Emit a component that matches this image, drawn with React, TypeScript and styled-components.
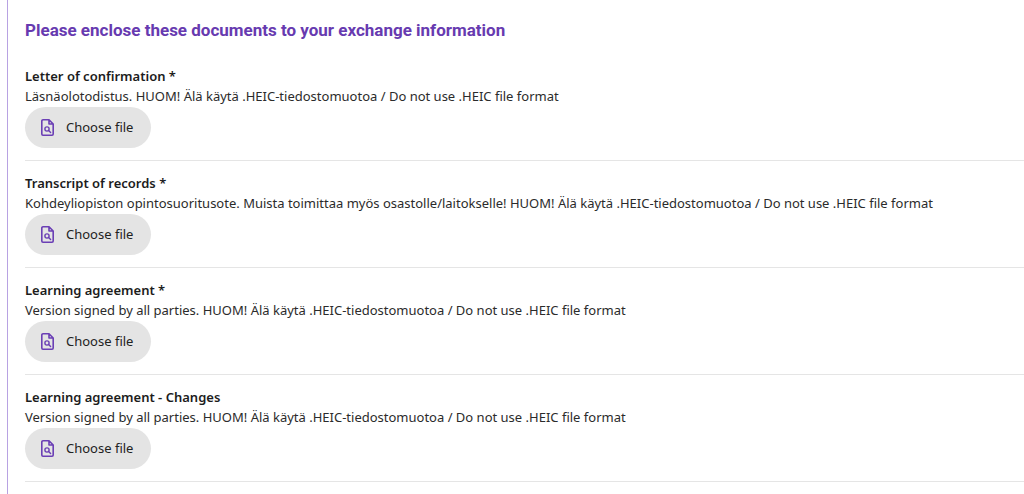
import React from "react";
import styled, { createGlobalStyle } from "styled-components";

const GlobalStyle = createGlobalStyle`
  * { box-sizing: border-box; }
  body { margin: 0; background: #fff; color: #2b2b2b; font-family: "Noto Sans", "Open Sans", sans-serif; font-size: 13px; line-height: 20px; }
`;

const Panel = styled.main`
  margin-left: 7px;
  padding: 18px 0 12px 17px;
  border-left: 1px solid #b8a2e2;
`;

const Title = styled.h2`
  margin: 0 0 24px;
  color: #673ab0;
  font-family: Roboto, sans-serif;
  font-size: 17px;
  font-weight: 700;
  line-height: 24px;
`;

const Field = styled.section`
  padding-bottom: 12px;
  border-bottom: 1px solid #e5e5e5;

  & + & {
    margin-top: 12px;
  }
`;

const Label = styled.h3`
  margin: 0;
  color: #1c1c1c;
  font-size: 13px;
  font-weight: 600;
  line-height: 20px;
`;

const Hint = styled.p`
  margin: 0 0 1px;
`;

const FileButton = styled.button`
  display: flex;
  align-items: center;
  gap: 12px;
  height: 41px;
  padding: 0 18px 1px 16px;
  border: 0;
  border-radius: 21px;
  background: #e4e4e4;
  color: #222;
  font: inherit;
  cursor: pointer;
`;

const FileIcon = () => (
  <svg width="13" height="17" viewBox="0 0 13 17" fill="none" stroke="#6b3fb5" strokeWidth="1.6" strokeLinejoin="round" aria-hidden="true">
    <path d="M8 .8H2A1.2 1.2 0 0 0 .8 2v13A1.2 1.2 0 0 0 2 16.200h9a1.200 1.200 0 0 0 1.200-1.200V5L8 .8v4.200h4.200" />
    <circle cx="6" cy="10" r="2.100" strokeWidth="1.4" />
    <path d="m7.600 11.600 2 2" strokeLinecap="round" strokeWidth="1.4" />
  </svg>
);

const documents = [
  { label: "Letter of confirmation *", hint: "Läsnäolotodistus. HUOM! Älä käytä .HEIC-tiedostomuotoa / Do not use .HEIC file format" },
  { label: "Transcript of records *", hint: "Kohdeyliopiston opintosuoritusote. Muista toimittaa myös osastolle/laitokselle! HUOM! Älä käytä .HEIC-tiedostomuotoa / Do not use .HEIC file format" },
  { label: "Learning agreement *", hint: "Version signed by all parties. HUOM! Älä käytä .HEIC-tiedostomuotoa / Do not use .HEIC file format" },
  { label: "Learning agreement - Changes", hint: "Version signed by all parties. HUOM! Älä käytä .HEIC-tiedostomuotoa / Do not use .HEIC file format" },
];

export default function App() {
  return (
    <>
      <GlobalStyle />
      <Panel>
        <Title>Please enclose these documents to your exchange information</Title>
        {documents.map((doc, i) => (
          <Field key={doc.label} aria-labelledby={`document-${i}`}>
            <Label id={`document-${i}`}>{doc.label}</Label>
            <Hint id={`hint-${i}`}>{doc.hint}</Hint>
            <FileButton type="button" aria-describedby={`document-${i} hint-${i}`}>
              <FileIcon />
              Choose file
            </FileButton>
          </Field>
        ))}
      </Panel>
    </>
  );
}
